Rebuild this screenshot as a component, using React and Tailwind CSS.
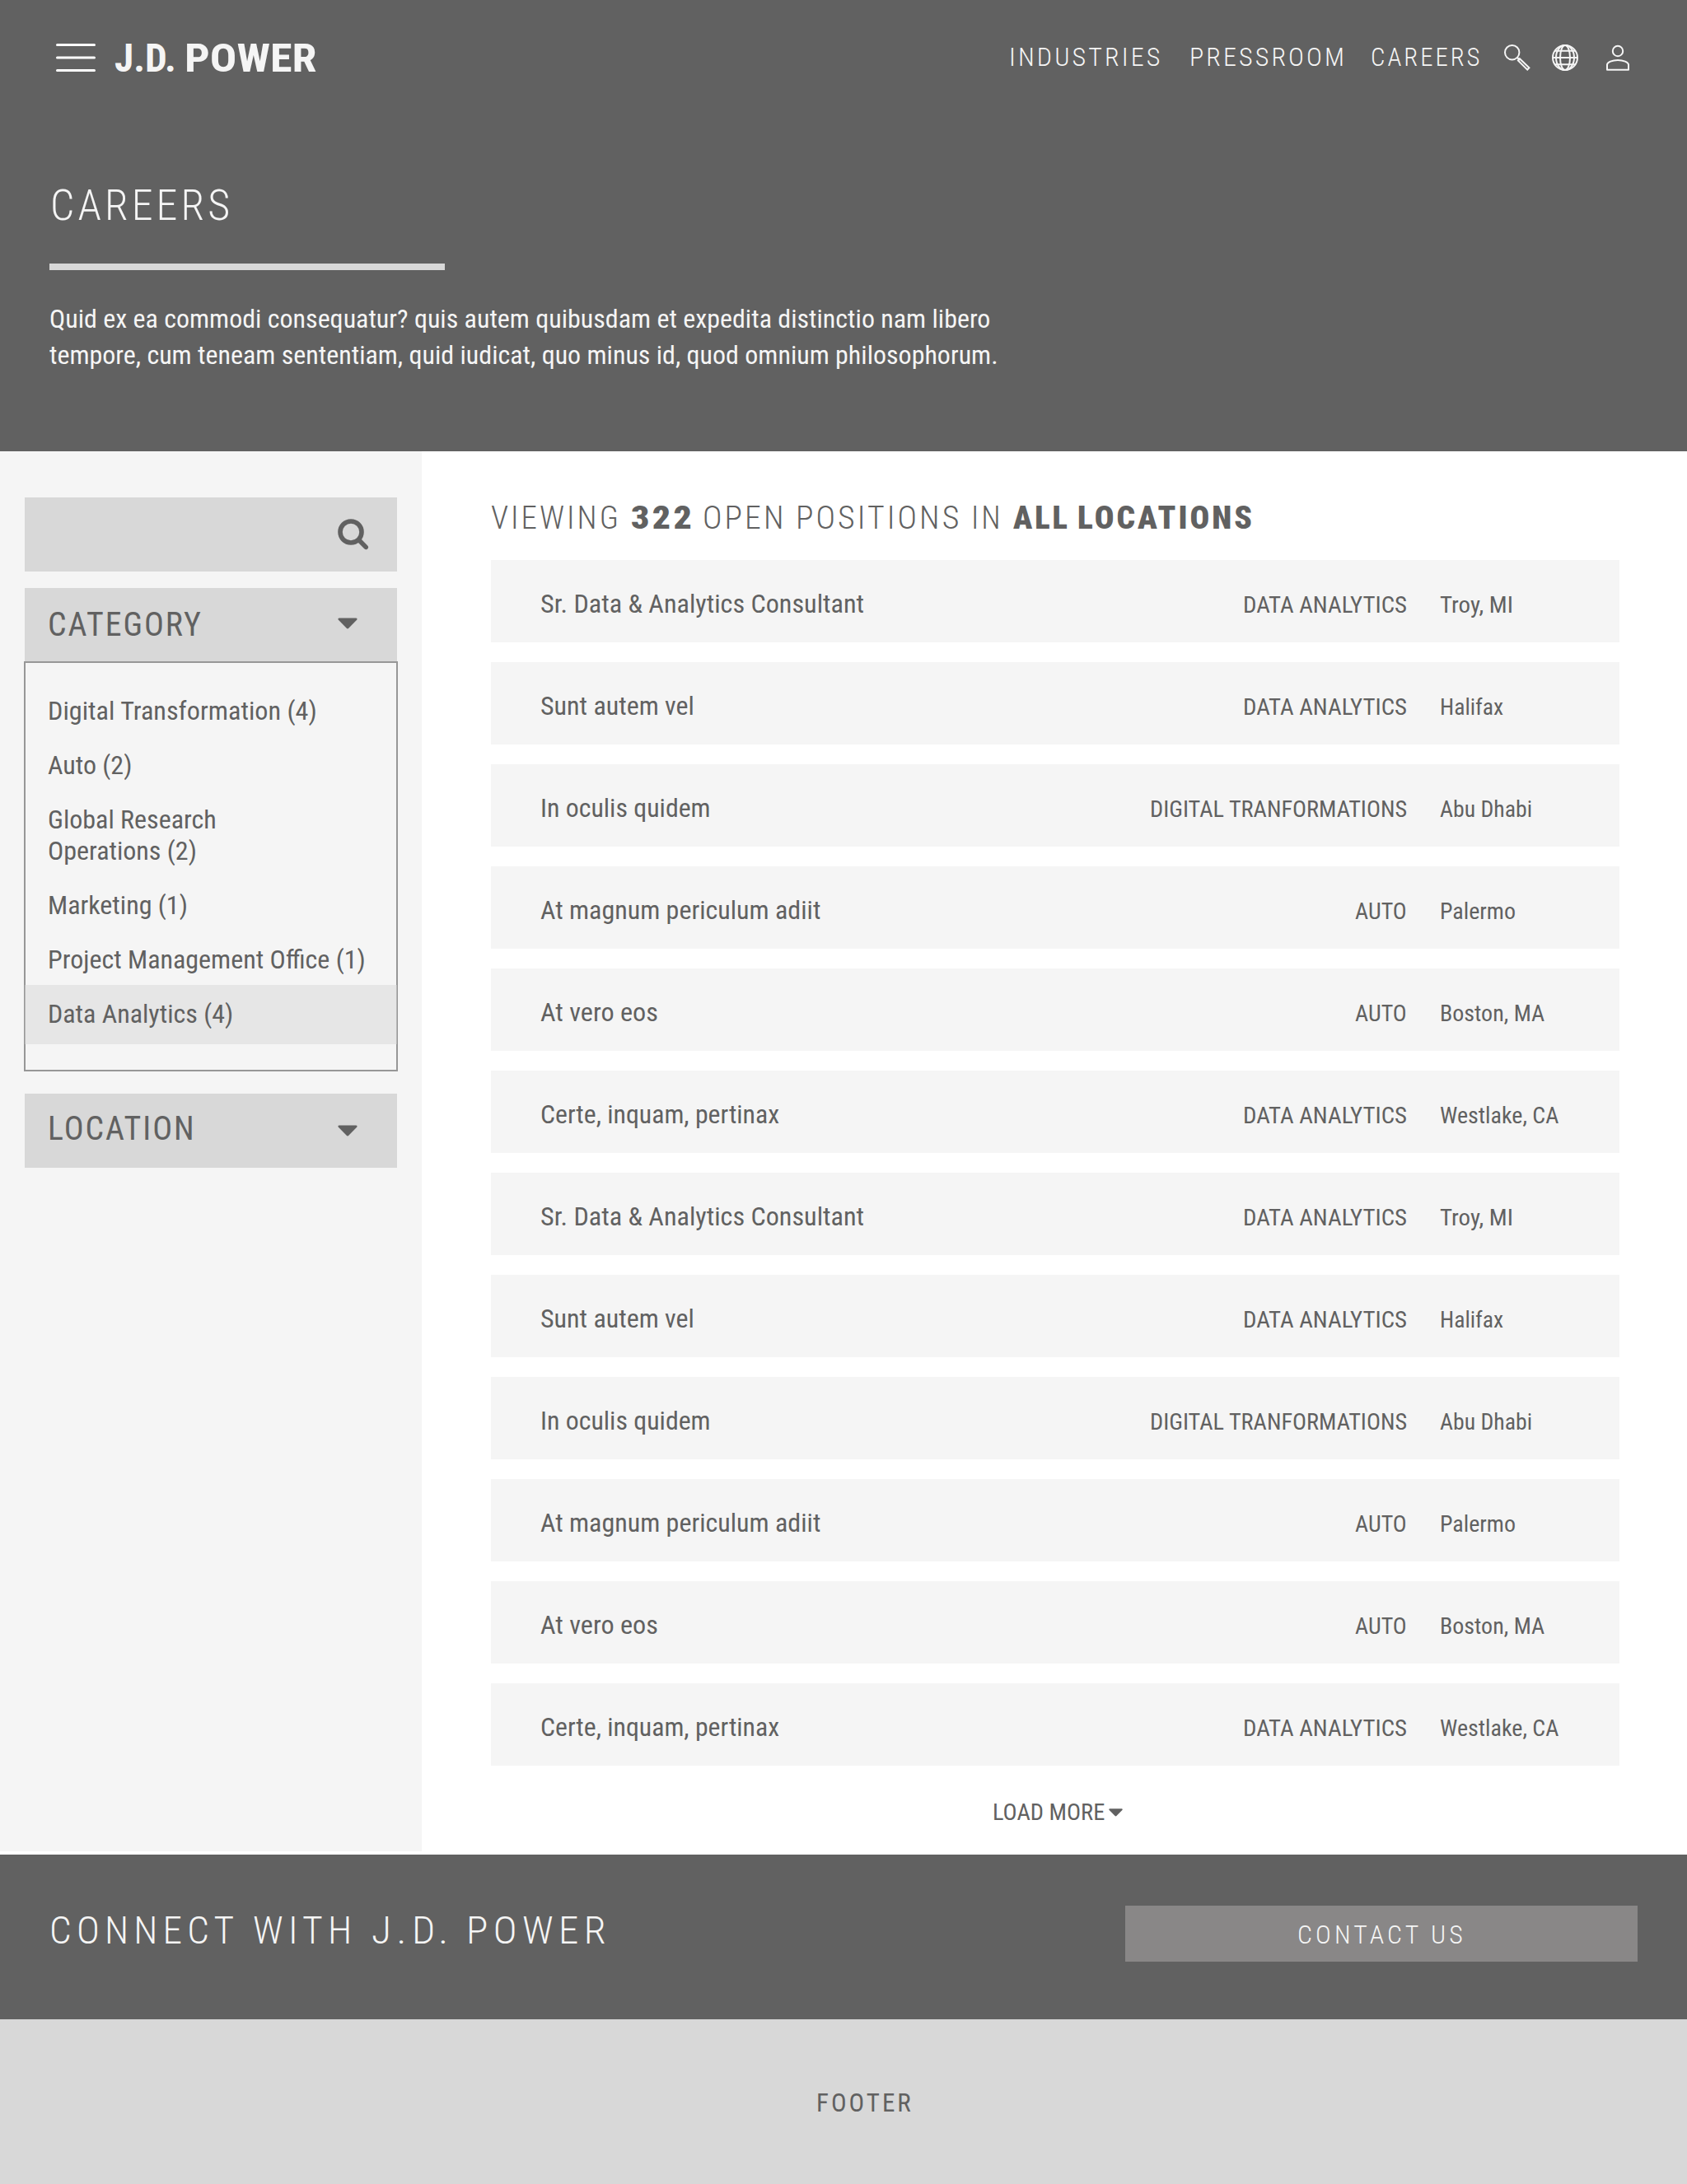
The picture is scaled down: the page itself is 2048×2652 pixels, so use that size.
import React, { useLayoutEffect, useRef, useState } from "react";

/* Single line of text stretched horizontally to an exact width. */
function Fit({ w, className = "", children }) {
  const ref = useRef(null);
  const [scale, setScale] = useState(1);
  useLayoutEffect(() => {
    const el = ref.current;
    const spacing = parseFloat(getComputedStyle(el).letterSpacing) || 0;
    setScale(w / (el.offsetWidth - spacing));
  }, [w]);
  return (
    <span className={`inline-block whitespace-nowrap ${className}`} style={{ width: w }}>
      <span ref={ref} className="inline-block origin-left" style={{ transform: `scaleX(${scale})` }}>
        {children}
      </span>
    </span>
  );
}

function Caret({ className = "" }) {
  return (
    <svg viewBox="0 0 24 14" className={className} fill="#616161">
      <path d="M1.8 0.4H22.2C23.6 0.4 24 1.8 23.1 2.8L13.3 12.8C12.5 13.6 11.5 13.6 10.7 12.8L0.9 2.8C0 1.8 0.4 0.4 1.8 0.4Z" />
    </svg>
  );
}

const categories = [
  { lines: [["Digital Transformation (4)", 327]] },
  { lines: [["Auto (2)", 102]] },
  { lines: [["Global Research", 205], ["Operations (2)", 181]] },
  { lines: [["Marketing (1)", 170]] },
  { lines: [["Project Management Office (1)", 386]] },
  { lines: [["Data Analytics (4)", 225]], active: true },
];

const base = [
  ["Sr. Data & Analytics Consultant", 393, "DATA ANALYTICS", 199, "Troy, MI", 89],
  ["Sunt autem vel", 187, "DATA ANALYTICS", 199, "Halifax", 77],
  ["In oculis quidem", 207, "DIGITAL TRANFORMATIONS", 312, "Abu Dhabi", 112],
  ["At magnum periculum adiit", 340, "AUTO", 63, "Palermo", 92],
  ["At vero eos", 143, "AUTO", 63, "Boston, MA", 127],
  ["Certe, inquam, pertinax", 290, "DATA ANALYTICS", 199, "Westlake, CA", 144],
];
const jobs = [...base, ...base];

export default function App() {
  return (
    <div className="flex h-[2652px] w-[2048px] flex-col bg-white font-['Roboto_Condensed','Roboto',sans-serif] font-[370] text-[#616161] [font-stretch:75%]">
      <header className="h-[548px] bg-[#616161] text-[#f5f5f5]">
        <div className="flex h-[139px] items-center pr-[70px] pl-[68px]">
          <svg className="h-[34px] w-12" viewBox="0 0 48 34" stroke="#fff" strokeWidth="3" strokeLinecap="round">
            <path d="M1.5 1.5H46.5M1.5 17H46.5M1.5 32.5H46.5" />
          </svg>
          <div className="ml-[23px] flex pt-[2px] text-[48px] font-bold">
            <Fit w={75}>J.D.</Fit>
            <Fit w={160} className="ml-[10px]">POWER</Fit>
          </div>
          <nav className="ml-auto flex items-center pt-[2px] text-[31px] font-[330] tracking-[3px]">
            <Fit w={183}>INDUSTRIES</Fit>
            <Fit w={188} className="ml-[36px]">PRESSROOM</Fit>
            <Fit w={133} className="ml-[32px]">CAREERS</Fit>
          </nav>
          <svg className="ml-[29px] size-8" viewBox="0 0 32 32" fill="none" stroke="#f5f5f5" strokeWidth="2">
            <circle cx="9.7" cy="9.7" r="8.7" />
            <path d="M15.8 15.8L19 19" />
            <path d="M18.9 17.2L30.4 28.2L28.2 30.6L16.9 19.4Z" />
          </svg>
          <svg className="ml-[26px] size-8" viewBox="0 0 32 32" fill="none" stroke="#f5f5f5" strokeWidth="2">
            <circle cx="16" cy="16" r="15" />
            <ellipse cx="16" cy="16" rx="6" ry="15" />
            <ellipse cx="16" cy="16" rx="11" ry="15" />
            <path d="M1 16H31M4 7.8H28M4 24.2H28" />
          </svg>
          <svg className="ml-[34px] h-8 w-7" viewBox="0 0 28 32" fill="none" stroke="#f5f5f5" strokeWidth="2">
            <circle cx="14" cy="8" r="6.2" />
            <path d="M1 30.8V24.5C1 21.5 7.5 18.9 14 18.9S27 21.5 27 24.5V30.8Z" strokeLinejoin="round" />
          </svg>
        </div>
        <div className="px-[60px] pt-[81px]">
          <h1 className="h-[60px] pl-px text-[51px] leading-[60px] font-[330] tracking-[4px]">
            <Fit w={218}>CAREERS</Fit>
          </h1>
          <div className="mt-10 h-2 w-[480px] bg-[#d8d8d8]" />
          <p className="mt-[37px] text-[32px] leading-[44px]">
            <Fit w={1142}>Quid ex ea commodi consequatur? quis autem quibusdam et expedita distinctio nam libero</Fit>
            <br />
            <Fit w={1152}>tempore, cum teneam sententiam, quid iudicat, quo minus id, quod omnium philosophorum.</Fit>
          </p>
        </div>
      </header>

      <div className="flex h-[1704px]">
        <aside className="h-[1700px] w-[512px] bg-[#f5f5f5] px-[30px] pt-14">
          <div className="flex h-[90px] items-center justify-end bg-[#d8d8d8] pr-[34px]">
            <svg className="size-[38px]" viewBox="0 0 38 38" fill="none" stroke="#616161">
              <circle cx="16" cy="16" r="13" strokeWidth="5.6" />
              <path d="M26 26L34.2 34.4" strokeWidth="5.6" strokeLinecap="round" />
            </svg>
          </div>
          <div className="mt-5 flex h-[90px] items-center bg-[#d8d8d8] pr-[48px] pl-7">
            <h2 className="text-[40px] leading-[60px] tracking-[2px]"><Fit w={186}>CATEGORY</Fit></h2>
            <Caret className="-mt-[5px] ml-auto h-[14px] w-6" />
          </div>
          <ul className="-mx-px -mt-px h-[498px] border-2 border-[#979797] pt-[25px] text-[32px] leading-[38px]">
            {categories.map(({ lines, active }) => (
              <li
                key={lines[0][0]}
                className={active ? "-mx-px -mt-[2px] bg-[#d8d8d8]/50 pt-4 pb-[18px] pl-[28px]" : "py-[14px] pl-[27px]"}
              >
                {lines.map(([t, w]) => (
                  <div key={t} className="h-[38px]"><Fit w={w}>{t}</Fit></div>
                ))}
              </li>
            ))}
          </ul>
          <div className="mt-[27px] flex h-[90px] items-center bg-[#d8d8d8] pr-[48px] pb-[5px] pl-7">
            <h2 className="text-[40px] leading-[60px] tracking-[2px]"><Fit w={178}>LOCATION</Fit></h2>
            <Caret className="mt-[4px] ml-auto h-[14px] w-6" />
          </div>
        </aside>

        <main className="flex-1 pt-[53px] pr-[82px] pl-[84px]">
          <h2 className="flex h-14 items-center text-[39px] leading-[56px] font-[320] tracking-[3px]">
            <Fit w={155}>VIEWING</Fit>
            <Fit w={74} className="ml-[15px] font-black">322</Fit>
            <Fit w={98} className="ml-[13px]">OPEN</Fit>
            <Fit w={198} className="ml-[15px]">POSITIONS</Fit>
            <Fit w={36} className="ml-[15px]">IN</Fit>
            <Fit w={66} className="ml-[15px] font-black">ALL</Fit>
            <Fit w={212} className="ml-[12px] font-black">LOCATIONS</Fit>
          </h2>
          <div className="mt-[23px] flex flex-col gap-6">
            {jobs.map(([title, tw, cat, cw, place, pw], i) => (
              <div key={i} className="flex h-[100px] items-baseline bg-[#f5f5f5] pt-[34px] pl-[60px] text-[32px] leading-[38px]">
                <Fit w={tw}>{title}</Fit>
                <Fit w={cw} className="ml-auto text-[28px]">{cat}</Fit>
                <div className="ml-10 w-[218px] text-[28px]"><Fit w={pw}>{place}</Fit></div>
              </div>
            ))}
          </div>
          <div className="mt-[37px] flex h-10 items-center pl-[609px] text-[28px] leading-10">
            <Fit w={136}>LOAD MORE</Fit>
            <Caret className="ml-[5px] h-[10px] w-[17px]" />
          </div>
        </main>
      </div>

      <section className="flex h-[200px] items-start bg-[#616161] pr-[60px] pl-[60px] text-[#f5f5f5]">
        <h2 className="mt-[62px] flex text-[46px] leading-[60px] font-[330] tracking-[6px]">
          <Fit w={224}>CONNECT</Fit>
          <Fit w={120} className="ml-[23px]">WITH</Fit>
          <Fit w={93} className="ml-[24px]">J.D.</Fit>
          <Fit w={170} className="ml-[22px]">POWER</Fit>
        </h2>
        <button className="mt-[62px] ml-auto flex h-[68px] w-[622px] items-center justify-center bg-[#898787] pt-[4px] pr-[5px] text-[31px] font-[330] tracking-[4px]">
          <Fit w={201}>CONTACT US</Fit>
        </button>
      </section>
      <footer className="flex h-[200px] items-center justify-center bg-[#d8d8d8] pt-[4px] pl-[49px] text-[31px] tracking-[3px]">
        <Fit w={115}>FOOTER</Fit>
      </footer>
    </div>
  );
}
